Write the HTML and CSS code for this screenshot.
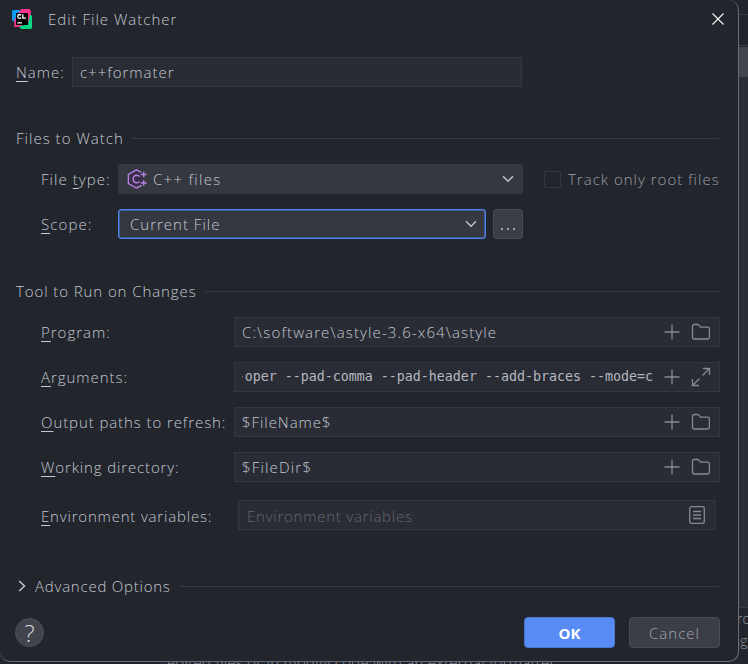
FILE: index.html
```html
<!DOCTYPE html>
<html lang="en">
<head>
<meta charset="utf-8">
<title>Edit File Watcher</title>
<link rel="stylesheet" href="styles.css">
</head>
<body>
<svg class="defs" width="0" height="0" aria-hidden="true">
  <symbol id="plus" viewBox="0 0 16 16"><path d="M8 .5v15M.5 8h15"/></symbol>
  <symbol id="folder" viewBox="0 0 20 18"><path d="M1.5 3.2Q1.5 1.5 3.2 1.5H6.6Q7.4 1.5 7.9 2.1L9.5 4.1H16.6Q18.4 4.1 18.4 5.9V14.2Q18.4 16 16.6 16H3.3Q1.5 16 1.5 14.2Z"/></symbol>
  <symbol id="chevron" viewBox="0 0 12 8"><path d="M1 1.2 6 6.2 11 1.2"/></symbol>
</svg>
<div class="behind">
  <div class="strip">
    <div class="strip-top"></div><div class="strip-mid"></div><div class="strip-tab"></div><div class="strip-list"></div>
    <div class="strip-text">ro</div><div class="strip-text second">ng</div>
  </div>
  <div class="below">edited files or in modify code with an external formatter</div>
</div>
<main class="dialog">
  <header class="titlebar">
    <svg class="logo" width="20" height="20" viewBox="0 0 20 20">
      <path fill="#079af0" d="M1 1h9v9L2 13 0 11V2Z"/>
      <path fill="#ff318c" d="M9 0h8.500l1.200 1.500V11L8 18H2.300V11Z"/>
      <path fill="#00d886" d="M18 6h1l1 1v12l-1 1H9l-2-2.500 9-2.500Z"/>
      <path d="M4 4h12v12H4Z"/>
      <g fill="none" stroke="#fff" stroke-width="1.300"><path d="M9 6.200Q8.300 5.500 7.300 5.500 5.700 5.600 5.700 7.400 5.700 9.200 7.300 9.300 8.400 9.300 9 8.500M10.800 5.200V9.200H14M5.300 13.800H10"/></g>
    </svg>
    <h1 class="title t-title">Edit File Watcher</h1>
    <svg class="close" width="12" height="12" viewBox="0 0 12 12"><path d="M.5.5 11.500 11.500M11.500.5.5 11.500"/></svg>
  </header>

  <div class="row name-row">
    <label class="name-label t-name"><u>N</u>ame:</label>
    <div class="field name-field"><span class="t-formater">c++formater</span></div>
  </div>

  <div class="section files-section"><h2 class="t-files">Files to Watch</h2><i></i></div>
  <div class="row">
    <label class="watch-label t-type">File <u>t</u>ype:</label>
    <div class="combo type-combo">
      <svg class="cpp" width="20" height="20" viewBox="0 0 20 20"><path class="hex" d="M14.500 3.500 9.500 .9 1.400 5.400V14.600L9.500 19 14.500 16.500"/><path d="M12.700 7.700Q11.600 6.200 9.800 6.200 6.200 6.400 6.200 10 6.200 13.600 9.800 13.800 11.600 13.800 12.700 12.300M16.700 2.700V8.300M13.800 5.500H19.600M16.700 11.200V16.800M13.800 14H19.600"/></svg>
      <span class="t-cpp">C++ files</span><svg class="chev" width="12" height="8"><use href="#chevron"/></svg>
    </div>
    <span class="check"></span><span class="muted t-track">Track only root files</span>
  </div>
  <div class="row">
    <label class="watch-label t-scope"><u>S</u>cope:</label>
    <div class="combo scope-combo"><span class="t-current">Current File</span><svg class="chev" width="12" height="8"><use href="#chevron"/></svg></div>
    <div class="more"><i></i><i></i><i></i></div>
  </div>

  <div class="section tool-section"><h2 class="t-tool">Tool to Run on Changes</h2><i></i></div>
  <div class="row">
    <label class="tool-label t-program"><u>P</u>rogram:</label>
    <div class="field"><span class="t-path">C:\software\astyle-3.6-x64\astyle</span><svg class="icon plus" width="16" height="16"><use href="#plus"/></svg><svg class="icon" width="20" height="18"><use href="#folder"/></svg></div>
  </div>
  <div class="row">
    <label class="tool-label t-args"><u>A</u>rguments:</label>
    <div class="field"><div class="mono"><span>-oper --pad-comma --pad-header --add-braces --mode=c</span></div><svg class="icon plus" width="16" height="16"><use href="#plus"/></svg><svg class="icon" width="20" height="20" viewBox="0 0 20 20"><path d="M12 1.500h6.500V8M18.500 1.500 11.500 8.500M1.500 12v6.500H8M1.500 18.500l7-7"/></svg></div>
  </div>
  <div class="row">
    <label class="tool-label t-output"><u>O</u>utput paths to refresh:</label>
    <div class="field"><span class="t-filename">$FileName$</span><svg class="icon plus" width="16" height="16"><use href="#plus"/></svg><svg class="icon" width="20" height="18"><use href="#folder"/></svg></div>
  </div>
  <div class="row">
    <label class="tool-label t-working"><u>W</u>orking directory:</label>
    <div class="field"><span class="t-filedir">$FileDir$</span><svg class="icon plus" width="16" height="16"><use href="#plus"/></svg><svg class="icon" width="20" height="18"><use href="#folder"/></svg></div>
  </div>
  <div class="row env-row">
    <label class="tool-label t-env"><u>E</u>nvironment variables:</label>
    <div class="field env-field"><span class="placeholder t-envph">Environment variables</span><svg class="icon plus" width="16" height="18" viewBox="0 0 16 18"><rect x=".7" y=".7" width="14.600" height="16.600" rx="2"/><path d="M4 5.500h8M4 9h8M4 12.500h8"/></svg></div>
  </div>

  <div class="section advanced"><svg class="arrow" width="8" height="12" viewBox="0 0 8 12"><path d="M1.200 1 6.500 6 1.200 11"/></svg><h2 class="t-adv">Advanced Options</h2><i></i></div>

  <footer class="footer">
    <button class="help">?</button>
    <button class="btn ok">OK</button>
    <button class="btn cancel t-cancel">Cancel</button>
  </footer>
</main>
</body>
</html>
```
FILE: styles.css
```css
* { box-sizing: border-box; }
body {
  margin: 0;
  position: relative;
  width: 748px;
  height: 664px;
  overflow: hidden;
  background: #22252c;
  color: #c3c8d2;
  font: 350 15px/20px "Open Sans", sans-serif;
  white-space: nowrap;
}
.defs { position: absolute; }
h1, h2 { margin: 0; font: inherit; }
label u { text-decoration-thickness: 1px; text-underline-offset: 3px; text-decoration-skip-ink: none; }

/* Window underneath the dialog */
.behind { position: absolute; inset: 0; color: #92969e; overflow: hidden; }
.strip { margin-left: 738px; display: flex; flex-direction: column; }
.strip-top { height: 15px; border-bottom: 1px solid #383b42; }
.strip-mid { height: 31px; border-bottom: 1px solid #383b42; }
.strip-tab { height: 31px; background: #42454c; border-top: 1px solid #22252c; }
.strip-list { height: 531px; background: #2a2d35; border-bottom: 1px solid #383b42; }
.strip-text { height: 22px; padding-top: 1px; font-size: 14px; margin-left: -2px; }
.strip-text:not(.second) { margin-left: -1px; }
.second { margin-left: -6px; }
.below { position: absolute; left: 167px; top: 652px; letter-spacing: .25px; line-height: 20px; }

.dialog {
  position: relative;
  display: flex;
  flex-direction: column;
  width: 739px;
  height: 662px;
  padding-left: 16px;
  background: #22252c;
  border: solid #626d80;
  border-width: 0 1px 1px 0;
  border-radius: 10px;
}
.titlebar { display: flex; align-items: center; height: 38px; margin-bottom: 19px; padding-right: 14px; }
.logo { margin: 0 16px 0 -4px; }
.title { flex: 1; }
.close { fill: none; stroke: #f0f1f3; stroke-width: 1.2; }

.row { display: flex; align-items: center; height: 30px; margin-bottom: 15px; flex: none; }
.field {
  display: flex;
  align-items: center;
  width: 486px;
  height: 30px;
  padding: 0 8px 0 7px;
  background: #292c34;
  border: 1px solid #34373e;
}
.name-row { margin-bottom: 41px; }
.name-label { width: 56px; }
.name-field { width: 450px; }
.watch-label { width: 102px; padding-left: 25px; }
.tool-label { width: 218px; padding-left: 25px; }

.section { display: flex; align-items: center; height: 20px; flex: none; }
.section i { flex: 1; height: 1px; margin: 0 19px 0 8px; background: #373a41; }
.files-section { margin-bottom: 16px; }
.tool-section { margin: 27px 0 16px; }

.combo {
  display: flex;
  align-items: center;
  height: 30px;
  padding: 0 9px;
  background: #353840;
  border-radius: 3px;
}
.type-combo { width: 405px; }
.scope-combo { width: 368px; padding: 0 8px 0 11px; border: 1px solid #4f83ec; box-shadow: inset 0 0 0 .5px #4f83ec; }
.cpp { margin-right: 6px; fill: none; stroke: #b383e0; stroke-width: 1.400; }
.hex { fill: #392c48; }
.chev { margin-left: auto; fill: none; stroke: #c3c6cd; stroke-width: 1.400; }
.check { width: 17px; height: 17px; margin: 0 7px 0 21px; border: 1px solid #34373e; border-radius: 2px; }
.muted { color: #9a9ea6; }
.more {
  display: flex;
  gap: 4px;
  align-items: flex-end;
  justify-content: center;
  width: 30px;
  height: 30px;
  margin-left: 7px;
  padding-bottom: 8px;
  background: #3b3e46;
  border: 1px solid #484b53;
  border-radius: 3px;
}
.more i { width: 2px; height: 2px; background: #9da6b3; }

.icon { flex: none; fill: none; stroke: #858991; stroke-width: 1.300; }
.plus { margin-left: auto; }
.plus + .icon { margin-left: 11px; }
.mono {
  display: flex;
  justify-content: flex-end;
  width: 411px;
  overflow: hidden;
  font: 13.300px/20px "DejaVu Sans Mono", monospace;
  color: #b4b8c0;
}
.env-row { margin-top: 3px; margin-bottom: 0; }
.env-row .t-env, .t-envph { padding-top: 2px; }
.env-field { width: 478px; margin-left: 4px; padding: 0 10px 0 8px; }
.placeholder { color: #646870; }
.advanced { margin-top: 46px; }
.arrow { margin: 0 9px 0 2px; fill: none; stroke: #c3c6cd; stroke-width: 1.500; }

.footer { display: flex; align-items: center; margin-top: 21px; padding-right: 18px; }
.help {
  width: 29px;
  height: 29px;
  margin: 0 auto 0 -1px;
  padding: 0;
  background: #41444c;
  border: 1px solid #4c4f57;
  border-radius: 50%;
  color: #d4d7dc;
  font: 300 24px/26px "Open Sans", sans-serif;
}
.btn {
  width: 91px;
  height: 31px;
  padding: 0;
  border-radius: 4px;
  font: inherit;
}
.ok { margin-right: 14px; background: #588bf3; border: 1px solid #4b76cf; color: #fff; font-weight: 700; }
.cancel { background: #3b3e46; border: 1px solid #484b53; color: #a2a6ae; }

/* Tracking per string */
.t-title { letter-spacing: 1px; }
.t-name { letter-spacing: 1px; }
.t-formater { letter-spacing: .98px; }
.t-files { letter-spacing: 1.03px; }
.t-type { letter-spacing: 1.05px; }
.t-cpp { letter-spacing: 1.3px; }
.t-track { letter-spacing: 1px; }
.t-scope { letter-spacing: 1.1px; }
.t-current { letter-spacing: 1px; }
.t-tool { letter-spacing: .91px; }
.t-program { letter-spacing: 1px; }
.t-args { letter-spacing: .95px; }
.t-output { letter-spacing: .91px; }
.t-working { letter-spacing: .87px; }
.t-env { letter-spacing: .81px; }
.t-envph { letter-spacing: .76px; }
.t-path { letter-spacing: 1.12px; }
.t-filename { letter-spacing: .95px; }
.t-filedir { letter-spacing: 1.18px; }
.t-adv { letter-spacing: .77px; }
.t-cancel { letter-spacing: 1px; }
```
